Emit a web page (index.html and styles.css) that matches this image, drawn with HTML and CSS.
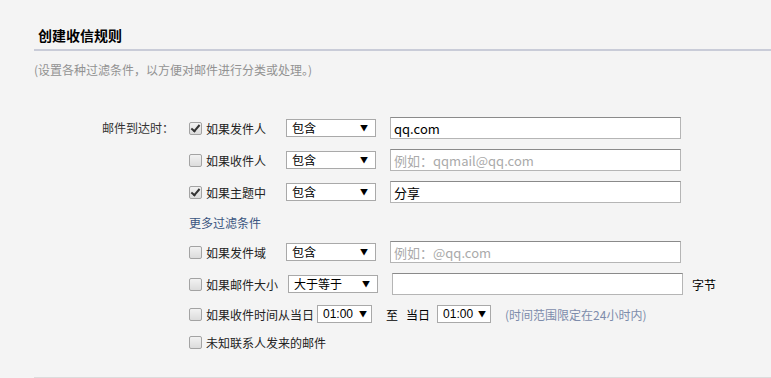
FILE: index.html
```html
<!DOCTYPE html>
<html lang="zh-CN">
<head>
    <meta charset="UTF-8">
    <title>创建收信规则</title>
    <link rel="stylesheet" href="styles.css">
</head>
<body>
    <div class="page">
        <h2 class="title">创建收信规则</h2>
        <p class="desc">(设置各种过滤条件<span class="punct">，</span>以方便对邮件进行分类或处理。)</p>

        <div class="rule">
            <div class="rule-label">邮件到达时<span class="punct">：</span></div>
            <div class="rule-body">
                <div class="row">
                    <input type="checkbox" class="chk" checked>
                    <span class="cond">如果发件人</span>
                    <span class="sel"><select><option>包含</option></select></span>
                    <input type="text" class="txt" value="qq.com">
                </div>
                <div class="row">
                    <input type="checkbox" class="chk">
                    <span class="cond">如果收件人</span>
                    <span class="sel"><select><option>包含</option></select></span>
                    <input type="text" class="txt" placeholder="例如：qqmail@qq.com">
                </div>
                <div class="row">
                    <input type="checkbox" class="chk" checked>
                    <span class="cond">如果主题中</span>
                    <span class="sel"><select><option>包含</option></select></span>
                    <input type="text" class="txt" value="分享">
                </div>
                <div class="row row-short">
                    <a class="more" href="#">更多过滤条件</a>
                </div>
                <div class="row">
                    <input type="checkbox" class="chk">
                    <span class="cond">如果发件域</span>
                    <span class="sel"><select><option>包含</option></select></span>
                    <input type="text" class="txt" placeholder="例如：@qq.com">
                </div>
                <div class="row">
                    <input type="checkbox" class="chk">
                    <span class="cond">如果邮件大小</span>
                    <span class="sel"><select><option>大于等于</option></select></span>
                    <input type="text" class="txt">
                    <span class="unit">字节</span>
                </div>
                <div class="row row-short">
                    <input type="checkbox" class="chk">
                    <span>如果收件时间从当日</span>
                    <span class="sel sel-time"><select><option>01:00</option></select></span>
                    <span class="to">至</span>
                    <span class="day">当日</span>
                    <span class="sel sel-time sel-end"><select><option>01:00</option></select></span>
                    <span class="hint">(时间范围限定在24小时内)</span>
                </div>
                <div class="row row-short">
                    <input type="checkbox" class="chk">
                    <span>未知联系人发来的邮件</span>
                </div>
            </div>
        </div>

        <div class="foot"></div>
    </div>
</body>
</html>
```

FILE: styles.css
```css
body {
    margin: 0;
    background: #f4f4f4;
    font-family: "Noto Sans CJK SC", "Noto Sans", sans-serif;
    font-size: 12px;
    color: #222;
}
.page {
    padding-left: 34px;
}
.title {
    margin: 0;
    padding: 25px 0 4px 4px;
    font-size: 14px;
    line-height: 20px;
    font-weight: bold;
    color: #000;
    border-bottom: 2px solid #c9ccd8;
}
.desc {
    margin: 10px 0 0;
    line-height: 18px;
    color: #929292;
}
/* 全角标点居中 */
.punct {
    font-family: "Noto Sans CJK TC", sans-serif;
}
.rule {
    display: flex;
    margin-top: 38px;
}
.rule-label {
    width: 140px;
    text-align: right;
    line-height: 22px;
    color: #333;
}
.rule-body {
    margin-left: 15px;
}
.row {
    display: flex;
    align-items: center;
    height: 22px;
    margin-bottom: 10px;
    white-space: nowrap;
}
.row-short {
    height: 18px;
}
.chk {
    appearance: none;
    -webkit-appearance: none;
    position: relative;
    width: 13px;
    height: 13px;
    margin: 0 4px 0 0;
    border: 1px solid #a3a3a3;
    border-radius: 2px;
    background: linear-gradient(#f2f2f2, #dcdcdc);
}
.chk:checked::after {
    content: "";
    position: absolute;
    left: 3px;
    top: 0px;
    width: 3px;
    height: 7px;
    border: solid #333;
    border-width: 0 2px 2px 0;
    transform: rotate(40deg);
}
.cond {
    min-width: 70px;
}
.sel {
    position: relative;
    margin-left: 10px;
}
.sel select {
    appearance: none;
    -webkit-appearance: none;
    display: block;
    width: 90px;
    height: 18px;
    padding: 0 0 0 5px;
    border: 1px solid #a9a9a9;
    border-radius: 0;
    background: #fff;
    font-family: "Noto Sans CJK SC", sans-serif;
    font-size: 12px;
    line-height: 16px;
    color: #000;
}
.sel::after {
    content: "▼";
    position: absolute;
    right: 8px;
    top: 3px;
    font-size: 8px;
    line-height: 12px;
    color: #000;
    pointer-events: none;
}
.sel-time {
    margin-left: 3px;
}
.sel-time select {
    width: 55px;
    font-family: "Liberation Sans", sans-serif;
    font-size: 12px;
    padding-left: 5px;
}
.sel-time::after {
    right: 5px;
}
.sel-end {
    margin-left: 7px;
}
.sel-end select {
    width: 54px;
}
.txt {
    box-sizing: border-box;
    width: 291px;
    height: 22px;
    margin: 0 0 0 14px;
    padding: 0 3px;
    border: 1px solid #b5b5b5;
    border-top-color: #8a8a8a;
    background: #fff;
    font-family: "Noto Sans CJK SC", sans-serif;
    font-size: 13px;
    color: #000;
    outline: none;
}
.txt::placeholder {
    font-family: "Noto Sans CJK TC", sans-serif;
    color: #aaa;
}
.unit {
    margin-left: 9px;
    color: #000;
}
.more {
    color: #3a557f;
    text-decoration: none;
}
.to {
    margin-left: 14px;
    color: #000;
}
.day {
    margin-left: 8px;
    color: #000;
}
.hint {
    margin-left: 14px;
    color: #7d8cab;
}
.foot {
    margin-top: 16px;
    border-top: 1px solid #dcdcdc;
}
```
